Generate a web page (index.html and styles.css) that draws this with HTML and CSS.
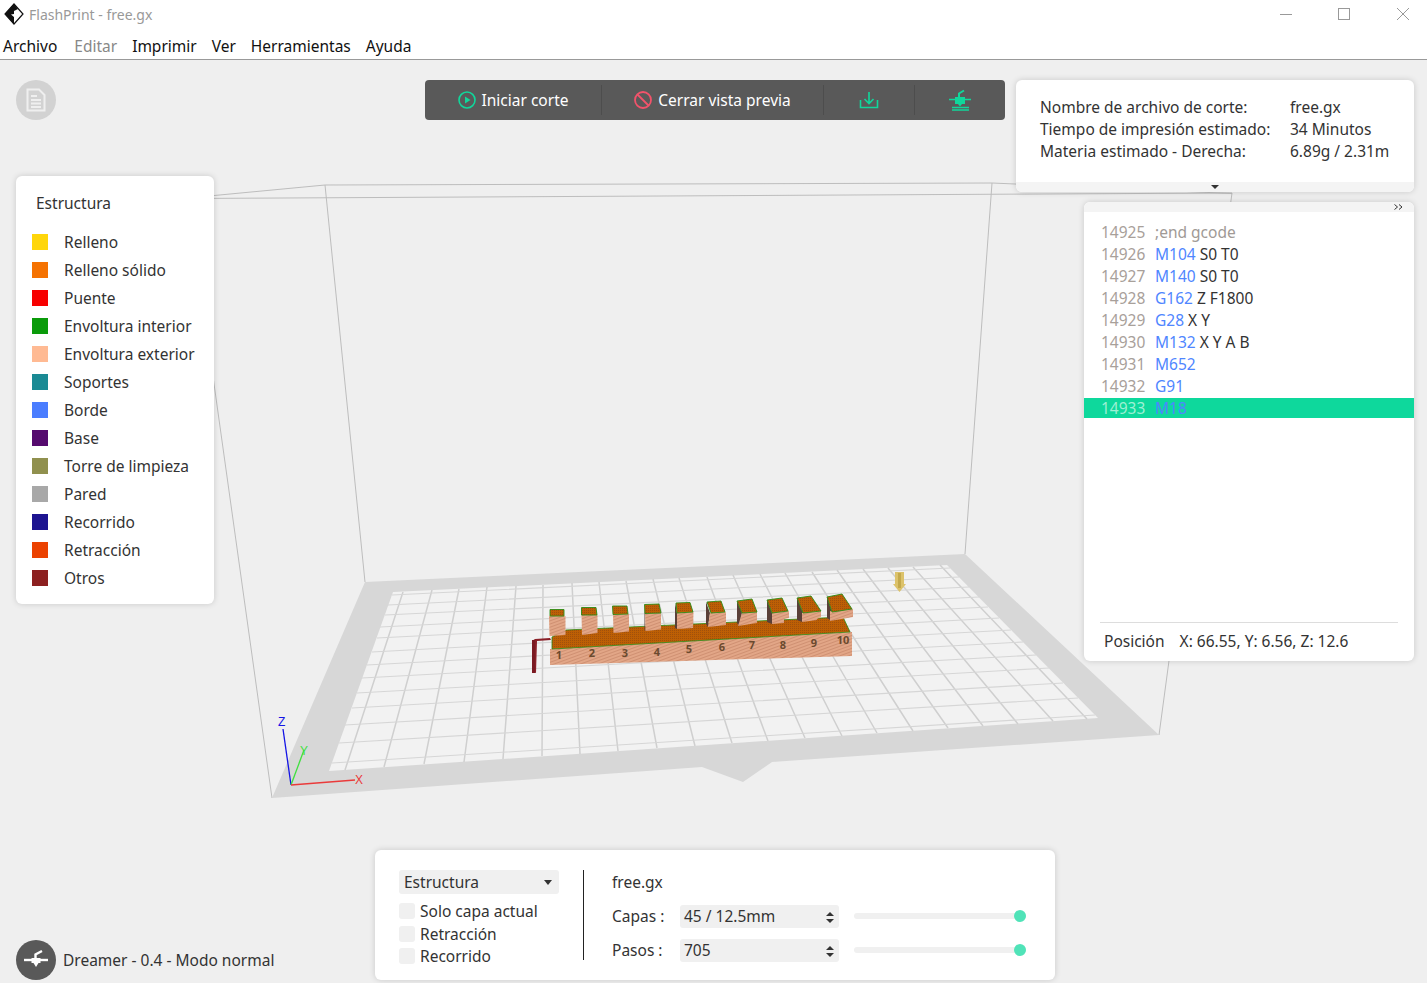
FILE: index.html
```html
<!DOCTYPE html>
<html lang="es">
<head>
<meta charset="utf-8">
<title>FlashPrint - free.gx</title>
<link rel="stylesheet" href="styles.css">
</head>
<body>
<div class="app">
  <header class="titlebar">
    <svg class="logo" width="20" height="22" viewBox="0 0 20 22"><path d="M10 1 19 11 10 21 1 11Z" fill="#fff" stroke="#111" stroke-width="1.2"/><path d="M10 1 1 11 10 21V14L7 11.500 10 11V8L14 6Z" fill="#111"/></svg>
    <span class="title">FlashPrint - free.gx</span>
    <div class="winctl">
      <svg width="12" height="12" viewBox="0 0 12 12"><path d="M0 6.500H12" stroke="#999"/></svg>
      <svg width="12" height="12" viewBox="0 0 12 12"><rect x=".5" y=".5" width="11" height="11" fill="none" stroke="#999"/></svg>
      <svg width="12" height="12" viewBox="0 0 12 12"><path d="M0 0 12 12M12 0 0 12" stroke="#999"/></svg>
    </div>
  </header>
  <nav class="menubar">
    <span>Archivo</span><span class="disabled">Editar</span><span>Imprimir</span><span>Ver</span><span>Herramientas</span><span>Ayuda</span>
  </nav>
  <main class="viewport">
    <svg class="scene" width="1427" height="923" viewBox="0 60 1427 923">
      <defs>
        <pattern id="pink" width="3" height="3" patternUnits="userSpaceOnUse" patternTransform="rotate(-20)">
          <rect width="3" height="3" fill="#e2a687"/><rect width="3" height="1" fill="#cf9072"/>
        </pattern>
        <pattern id="brown" width="2" height="2" patternUnits="userSpaceOnUse">
          <rect width="2" height="2" fill="#bd5f04"/><rect width="1" height="1" fill="#a0500c"/>
        </pattern>
      </defs>
      <g fill="none" stroke="#bdbdbd">
        <path d="M188 198 325 185 992 183 1232 193.500M188 198.500 1232 193M325 185 365 582M992 183 965 554M1232 193 1159 735M188 198 272 798"/>
      </g>
      <path d="M365 582 965 554 1159 735 772 762 743 782 702 767 272 798Z" fill="#d7d7d7"/>
      <path d="M393 592 947 565 1098 718 329 771Z" fill="#f2f2f2"/>
      <path class="grid grid-v" d="M345 770 403 592M384 767 432 590M424 764 459 589M464 762 487 587M503 759 516 586M542 756 543 585M580 754 572 583M618 751 599 582M657 748 626 581M695 746 653 579M732 743 679 578M768 741 707 577M805 738 733 575M842 736 760 574M877 733 785 573M913 731 812 572M948 728 837 570M983 726 863 569M1018 724 888 568M1053 721 913 567M1087 719 940 565"/>
      <path class="grid grid-h" d="M392 595 950 568M388 605 959 577M385 615 969 587M380 627 979 597M377 638 988 607M372 652 999 618M367 665 1011 630M362 678 1023 642M357 693 1036 655M352 708 1049 668M345 725 1063 683M339 743 1078 698M332 763 1095 715"/>

      <path d="M550 638 535 639 532 641 532 672 536 673 537 641 551 640Z" fill="#8a2028"/>
      <rect x="532" y="640" width="3" height="33" fill="#7a1a22"/>
      <polygon points="550,649 852,632 852,656 550,665" fill="url(#pink)"/>
      <polygon points="552,637 566,630 843,617 850,632 552,649" fill="url(#brown)" stroke="#2d8c14" stroke-width=".8"/>

      <g class="post">
        <polygon class="f" points="549,616 565.500,616 565.500,635 549.500,636"/><polygon class="t" points="550,609.500 564,609.500 564,616 550,616"/>
        <polygon class="f" points="581.500,615 597.500,615 597.500,633 582,635"/><polygon class="t" points="581.500,607.500 596,607.500 597,615 581.500,615"/>
        <polygon class="f" points="613,614.500 629,614 629,631.500 613.500,633"/><polygon class="t" points="612.500,606 627,606 628,614 613,614.500"/>
        <polygon class="s" points="644.500,604.500 645,613.500 645.500,631 644.500,630"/><polygon class="f" points="645,613.500 661,613 661,629.500 645.500,631"/><polygon class="t" points="644.500,604.500 659,604 661,613 645,613.500"/>
        <polygon class="s" points="675,603 677,613 677,629 675,628"/><polygon class="f" points="677,613 693.500,612 693,628 677,629"/><polygon class="t" points="676,603 690,602.500 693,612 677,613"/>
        <polygon class="s" points="706,602 710,613 708,627 706,624"/><polygon class="f" points="710,613 726,612 726,625 708,627"/><polygon class="t" points="707,602 721,601 725,612 711,613"/>
        <polygon class="s" points="737,601 742,613 739,626 737,623"/><polygon class="f" points="742,613 757,612 757,623 738,626"/><polygon class="t" points="737,601 752,599 757,612 742,613"/>
        <polygon class="s" points="767,600 772,613 772,624 767,622"/><polygon class="f" points="772,613 789,611 789,618 784,619 784,623 772,624"/><polygon class="t" points="767,600 782,598 788,611 772,613"/>
        <polygon class="s" points="797,598 803,613 802,622 797,620"/><polygon class="f" points="802,613 821,611 821,617 817,619 817,620 802,622"/><polygon class="t" points="797,598 811,596 821,611 803,613"/>
        <polygon class="s" points="827,597 832,612 830,620 827,618"/><polygon class="f" points="830,611 853,609 853,617 830,621"/><polygon class="t" points="827,597 842,594 852,609 832,612"/>
      </g>
      <g class="digits">
        <text x="559" y="659">1</text><text x="592" y="657">2</text><text x="625" y="657">3</text><text x="657" y="656">4</text><text x="689" y="653">5</text><text x="722" y="651">6</text><text x="752" y="649">7</text><text x="783" y="649">8</text><text x="814" y="647">9</text><text x="843" y="644">10</text>
      </g>
      <path d="M895 572H904L904 584H906L899.500 592 893 584H895Z" fill="#dcc26a"/>
      <path d="M898 573H901V588H898Z" fill="#c4a94c"/>

      <path d="M291 785 283 729" stroke="#1414e6" stroke-width="1.300"/>
      <path d="M291 785 304 750" stroke="#3fe03f" stroke-width="1.300"/>
      <path d="M291 785 355 780" stroke="#ea3a3a" stroke-width="1.300"/>
      <text class="axis ax-z" x="278" y="726">Z</text>
      <text class="axis ax-y" x="300" y="755">Y</text>
      <text class="axis ax-x" x="355" y="784">X</text>
    </svg>

    <button class="round-btn doc-btn" type="button">
      <svg width="20" height="24" viewBox="0 0 20 24"><path d="M1.500 1.500H13L18.500 7V22.500H1.500Z" fill="none" stroke="#efefef" stroke-width="2"/><path d="M5 8H11M5 12H15M5 15.500H15M5 19H15" stroke="#efefef" stroke-width="2"/></svg>
    </button>

    <div class="toolbar">
      <div class="tool tool-start">
        <svg width="18" height="18" viewBox="0 0 18 18"><circle cx="9" cy="9" r="8" fill="none" stroke="#10d79b" stroke-width="1.600"/><path d="M7 5.500 12.500 9 7 12.500Z" fill="#10d79b"/></svg>
        <span>Iniciar corte</span>
      </div>
      <div class="tool tool-close">
        <svg width="18" height="18" viewBox="0 0 18 18"><circle cx="9" cy="9" r="8" fill="none" stroke="#f2536b" stroke-width="1.800"/><path d="M3.500 3.500 14.500 14.500" stroke="#f2536b" stroke-width="1.800"/></svg>
        <span>Cerrar vista previa</span>
      </div>
      <div class="tool tool-save">
        <svg width="20" height="18" viewBox="0 0 20 18"><path d="M1.500 9V16.500H18.500V9M10 1V12M5.500 8 10 12.500 14.500 8" fill="none" stroke="#10d79b" stroke-width="1.600"/></svg>
      </div>
      <div class="tool tool-print">
        <svg width="24" height="24" viewBox="0 0 24 24"><path d="M1 11.500H23M4 19.500H21M4 22H21" stroke="#10d79b" stroke-width="1.300" fill="none"/><path d="M7 9H17V16H14L12 18.500 10 16H7Z" fill="#10d79b"/><path d="M11 9V5.500L16 2.500" stroke="#10d79b" stroke-width="2" fill="none"/></svg>
      </div>
    </div>

    <aside class="panel legend">
      <h2 class="legend-title">Estructura</h2>
      <ul class="legend-list">
        <li><i class="sw sw1"></i>Relleno</li>
        <li><i class="sw sw2"></i>Relleno sólido</li>
        <li><i class="sw sw3"></i>Puente</li>
        <li><i class="sw sw4"></i>Envoltura interior</li>
        <li><i class="sw sw5"></i>Envoltura exterior</li>
        <li><i class="sw sw6"></i>Soportes</li>
        <li><i class="sw sw7"></i>Borde</li>
        <li><i class="sw sw8"></i>Base</li>
        <li><i class="sw sw9"></i>Torre de limpieza</li>
        <li><i class="sw sw10"></i>Pared</li>
        <li><i class="sw sw11"></i>Recorrido</li>
        <li><i class="sw sw12"></i>Retracción</li>
        <li><i class="sw sw13"></i>Otros</li>
      </ul>
    </aside>

    <section class="panel info">
      <dl class="info-grid">
        <dt>Nombre de archivo de corte:</dt><dd>free.gx</dd>
        <dt>Tiempo de impresión estimado:</dt><dd>34 Minutos</dd>
        <dt>Materia estimado - Derecha:</dt><dd>6.89g / 2.31m</dd>
      </dl>
      <div class="strip strip-down"><i class="caret"></i></div>
    </section>

    <section class="panel gcode">
      <div class="strip strip-top">
        <svg width="9" height="6" viewBox="0 0 9 6"><path d="M.5 .5 3.500 3 .5 5.500M5 .5 8 3 5 5.500" fill="none" stroke="#333"/></svg>
      </div>
      <ol class="gcode-list">
        <li><span class="ln">14925</span><span class="cm">;end gcode</span></li>
        <li><span class="ln">14926</span><span class="op">M104</span> S0 T0</li>
        <li><span class="ln">14927</span><span class="op">M140</span> S0 T0</li>
        <li><span class="ln">14928</span><span class="op">G162</span> Z F1800</li>
        <li><span class="ln">14929</span><span class="op">G28</span> X Y</li>
        <li><span class="ln">14930</span><span class="op">M132</span> X Y A B</li>
        <li><span class="ln">14931</span><span class="op">M652</span></li>
        <li><span class="ln">14932</span><span class="op">G91</span></li>
        <li class="current"><span class="ln">14933</span><span class="op">M18</span></li>
      </ol>
      <footer class="pos"><span>Posición</span><span>X: 66.55, Y: 6.56, Z: 12.6</span></footer>
    </section>

    <div class="printer">
      <button class="round-btn printer-btn" type="button">
        <svg width="26" height="22" viewBox="0 0 26 22"><path d="M1 11H25" stroke="#fff" stroke-width="2.400"/><path d="M8.500 9H17.500V14H15.500L13 18 10.500 14H8.500Z" fill="#fff"/><path d="M12.500 9V5.500L19 2" stroke="#fff" stroke-width="2.400" fill="none"/></svg>
      </button>
      <span>Dreamer - 0.4 - Modo normal</span>
    </div>

    <section class="panel controls">
      <div class="ctl-left">
        <div class="select"><span>Estructura</span><i class="caret caret-sel"></i></div>
        <label class="check"><i class="box"></i>Solo capa actual</label>
        <label class="check"><i class="box"></i>Retracción</label>
        <label class="check"><i class="box"></i>Recorrido</label>
      </div>
      <div class="ctl-right">
        <div class="file">free.gx</div>
        <div class="ctl-row">
          <span class="ctl-label">Capas :</span>
          <div class="spin"><span>45 / 12.5mm</span><span class="arrows"><i class="up"></i><i class="down"></i></span></div>
          <div class="slider"><i class="thumb"></i></div>
        </div>
        <div class="ctl-row">
          <span class="ctl-label">Pasos :</span>
          <div class="spin"><span>705</span><span class="arrows"><i class="up"></i><i class="down"></i></span></div>
          <div class="slider"><i class="thumb"></i></div>
        </div>
      </div>
    </section>
  </main>
</div>
</body>
</html>
```
FILE: styles.css
```css
* { box-sizing: border-box; }
html, body { margin: 0; height: 100%; }
body { font-family: "Noto Sans", "Open Sans", "Liberation Sans", sans-serif; font-size: 15.500px; color: #333; background: #fff; overflow: hidden; }
.app { display: flex; flex-direction: column; height: 983px; }

.titlebar { display: flex; align-items: center; height: 30px; padding: 0 18px 2px 4px; background: #fff; }
.logo { flex: none; }
.title { margin-left: 5px; font-size: 14px; color: #999; }
.winctl { margin-left: auto; display: flex; gap: 46px; }
.winctl svg { display: block; }
.winctl svg:last-child { margin-left: 1px; }

.menubar { display: flex; gap: 15px; height: 30px; padding: 6px 0 0 3px; background: #fff; border-bottom: 1px solid #999; color: #111; line-height: 20px; }
.menubar span:first-child { margin-right: 2px; }
.menubar .disabled { color: #888; }

.viewport { position: relative; flex: 1; background: #efefef; overflow: hidden; }
.scene { position: absolute; left: 0; top: 0; }
.grid { fill: none; stroke: #cfcfcf; }
.grid-v { stroke-width: 1.500; }
.grid-h { stroke-width: 1.100; stroke: #d6d6d6; }
.post .f { fill: url(#pink); }
.post .t { fill: url(#brown); stroke: #2d8c14; stroke-width: .9; }
.post .s { fill: #5a4038; }
.digits text { font-size: 11px; font-weight: 700; fill: #6b4a2e; text-anchor: middle; font-family: "Noto Sans", sans-serif; }
.axis { font-size: 12px; font-family: "Liberation Sans", sans-serif; }
.ax-z { fill: #1414e6; }
.ax-y { fill: #3fe03f; }
.ax-x { fill: #ea3a3a; }

.panel { position: absolute; background: #fff; border-radius: 6px; box-shadow: 0 0 6px rgba(0, 0, 0, .16); }

.round-btn { display: flex; align-items: center; justify-content: center; width: 40px; height: 40px; padding: 0; border: 0; border-radius: 50%; }
.doc-btn { position: absolute; left: 16px; top: 20px; background: #d2d2d2; }

.toolbar { position: absolute; left: 425px; top: 20px; display: flex; align-items: center; width: 580px; height: 40px; background: #595959; border-radius: 4px; color: #fff; }
.tool { display: flex; align-items: center; justify-content: center; gap: 6px; height: 30px; border-right: 1px solid #4d4d4d; }
.tool:last-child { border-right: 0; }
.tool-start { width: 177px; }
.tool-close { width: 222px; }
.tool-save { width: 91px; }
.tool-print { width: 90px; }

.legend { left: 16px; top: 116px; width: 198px; height: 428px; padding: 16px 0 0 16px; }
.legend-title { margin: 0 0 14px 4px; font-size: 15.500px; font-weight: 400; line-height: 22px; }
.legend-list { margin: 0; padding: 0; list-style: none; }
.legend-list li { display: flex; align-items: center; height: 28px; line-height: 26px; }
.sw { width: 16px; height: 16px; margin-right: 16px; flex: none; }
.sw1 { background: #ffd60a; } .sw2 { background: #f57200; } .sw3 { background: #f70000; }
.sw4 { background: #0a9b0a; } .sw5 { background: #ffba93; } .sw6 { background: #1a8a94; }
.sw7 { background: #4a7dff; } .sw8 { background: #550a6e; } .sw9 { background: #90904e; }
.sw10 { background: #a8a8a8; } .sw11 { background: #1d1490; } .sw12 { background: #eb4200; }
.sw13 { background: #8c2020; }

.info { left: 1016px; top: 20px; width: 398px; height: 112px; display: flex; flex-direction: column; overflow: hidden; }
.info-grid { flex: 1; display: grid; grid-template-columns: 250px 1fr; grid-auto-rows: 22px; margin: 0; padding: 16px 0 0 24px; }
.info-grid dt, .info-grid dd { margin: 0; line-height: 22px; white-space: nowrap; }
.strip { background: #f4f4f4; }
.strip-down { display: flex; justify-content: center; align-items: center; height: 10px; padding-left: 0; }
.caret { width: 0; height: 0; border: 4px solid transparent; border-top: 4px solid #333; border-bottom: 0; }

.gcode { left: 1084px; top: 142px; width: 330px; height: 459px; display: flex; flex-direction: column; overflow: hidden; }
.strip-top { display: flex; justify-content: flex-end; align-items: center; height: 10px; padding-right: 11px; }
.gcode-list { flex: 1; margin: 0; padding: 9px 0 0; list-style: none; }
.gcode-list li { height: 22px; line-height: 22px; padding-left: 17px; white-space: pre; }
.gcode-list .current { height: 20px; line-height: 20px; background: #0ed89c; margin-top: 1px; }
.ln { display: inline-block; width: 54px; color: #a8a09a; }
.current .ln { color: #9df0d4; }
.cm { color: #a09a96; }
.op { color: #4f86ff; }
.pos { display: flex; gap: 15px; height: 39px; margin: 0 16px; padding: 7px 0 0 4px; border-top: 1px solid #ddd; line-height: 22px; }

.printer { position: absolute; left: 16px; top: 880px; display: flex; align-items: center; gap: 7px; }
.printer-btn { background: #595959; }

.controls { left: 375px; top: 790px; width: 680px; height: 130px; display: flex; padding: 20px 0 0 24px; }
.ctl-left { width: 185px; height: 90px; border-right: 1px solid #222; }
.select { display: flex; align-items: center; justify-content: space-between; width: 160px; height: 24px; padding: 0 5px; background: #f0f0f0; border-radius: 3px; }
.caret-sel { border-width: 5px 4px 0; margin-right: 2px; }
.check { display: flex; align-items: center; gap: 5px; height: 22.500px; line-height: 22px; }
.select + .check { margin-top: 6px; }
.box { width: 16px; height: 16px; background: #f0f0f0; border-radius: 3px; flex: none; }
.ctl-right { padding-left: 28px; flex: 1; }
.file { height: 24px; line-height: 24px; margin-bottom: 11px; }
.ctl-row { display: flex; align-items: center; height: 23px; margin-bottom: 11px; line-height: 23px; }
.ctl-label { width: 68px; }
.spin { display: flex; align-items: center; justify-content: space-between; width: 159px; height: 23px; padding: 0 5px 0 4px; background: #f0f0f0; border-radius: 3px; }
.arrows { display: flex; flex-direction: column; gap: 3px; margin-top: 1px; }
.up, .down { width: 0; height: 0; border-left: 4px solid transparent; border-right: 4px solid transparent; }
.up { border-bottom: 4px solid #333; }
.down { border-top: 4px solid #333; }
.slider { position: relative; width: 172px; height: 6px; margin-left: 15px; margin-top: -1px; background: #f0f0f0; border-radius: 3px; }
.thumb { position: absolute; right: 0; top: -3px; width: 12px; height: 12px; border-radius: 50%; background: #50e3b8; }
```
